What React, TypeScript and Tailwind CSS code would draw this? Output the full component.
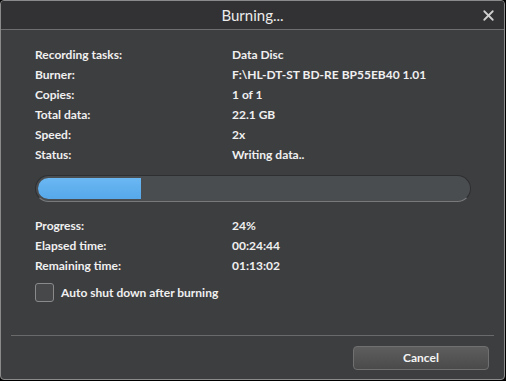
import { X } from 'lucide-react';

const info: [string, string][] = [
  ['Recording tasks:', 'Data Disc'],
  ['Burner:', 'F:\\HL-DT-ST BD-RE BP55EB40 1.01'],
  ['Copies:', '1 of 1'],
  ['Total data:', '22.1 GB'],
  ['Speed:', '2x'],
  ['Status:', 'Writing data..'],
];

const timing: [string, string][] = [
  ['Progress:', '24%'],
  ['Elapsed time:', '00:24:44'],
  ['Remaining time:', '01:13:02'],
];

function Row({ label, value }: { label: string; value: string }) {
  return (
    <div className="flex h-5 items-center">
      <span className="w-[197px]">{label}</span>
      <span>{value}</span>
    </div>
  );
}

export default function App() {
  const progress = 24;

  return (
    <div className="h-[381px] w-[506px] bg-black">
      <div
        className="flex h-[380px] w-[505px] flex-col overflow-hidden rounded-[4px] border border-[#8a8a8a] bg-[#3d3e40] text-[12px] font-bold text-[#f0f0f0]"
        style={{ fontFamily: 'Lato, "Open Sans", sans-serif' }}
      >
        {/* title bar */}
        <div className="relative flex h-[29px] shrink-0 items-center justify-center border-b border-[#6e6e6e] bg-[#323234]">
          <span className="text-[15px] font-normal text-[#ececec]">Burning...</span>
          <X className="absolute right-[7px] top-[6px] text-[#d0d0d0]" size={17} strokeWidth={2.5} />
        </div>

        <div className="flex flex-1 flex-col px-[34px] pt-[15px]">
          {info.map(([l, v]) => (
            <Row key={l} label={l} value={v} />
          ))}

          <div className="mt-[10px] h-[27px] w-[436px] overflow-hidden rounded-full border border-[#2e2f31] border-b-[#77797b] bg-[#4a4d50] p-[2px]">
            <div className="h-full rounded-l-full bg-gradient-to-b from-[#6ab7f2] to-[#56a8ea]" style={{ width: `${progress}%` }} />
          </div>

          <div className="mt-[14px]">
            {timing.map(([l, v]) => (
              <Row key={l} label={l} value={v} />
            ))}
          </div>

          <label className="mt-[7px] flex items-center gap-[7px]">
            <span className="h-[19px] w-[19px] rounded-[3px] border border-[#8a8a8a] bg-[#47484a]" />
            <span>Auto shut down after burning</span>
          </label>
        </div>

        <div className="mx-[10px] border-t border-[#6a6a6a]" />
        <div className="flex h-[43px] items-center justify-end pr-[15px]">
          <button className="h-[24px] w-[136px] rounded-[4px] border border-[#707070] bg-gradient-to-b from-[#5e5e5e] to-[#4a4a4a] text-[12px] font-bold text-[#f4f4f4]">
            Cancel
          </button>
        </div>
      </div>
    </div>
  );
}
